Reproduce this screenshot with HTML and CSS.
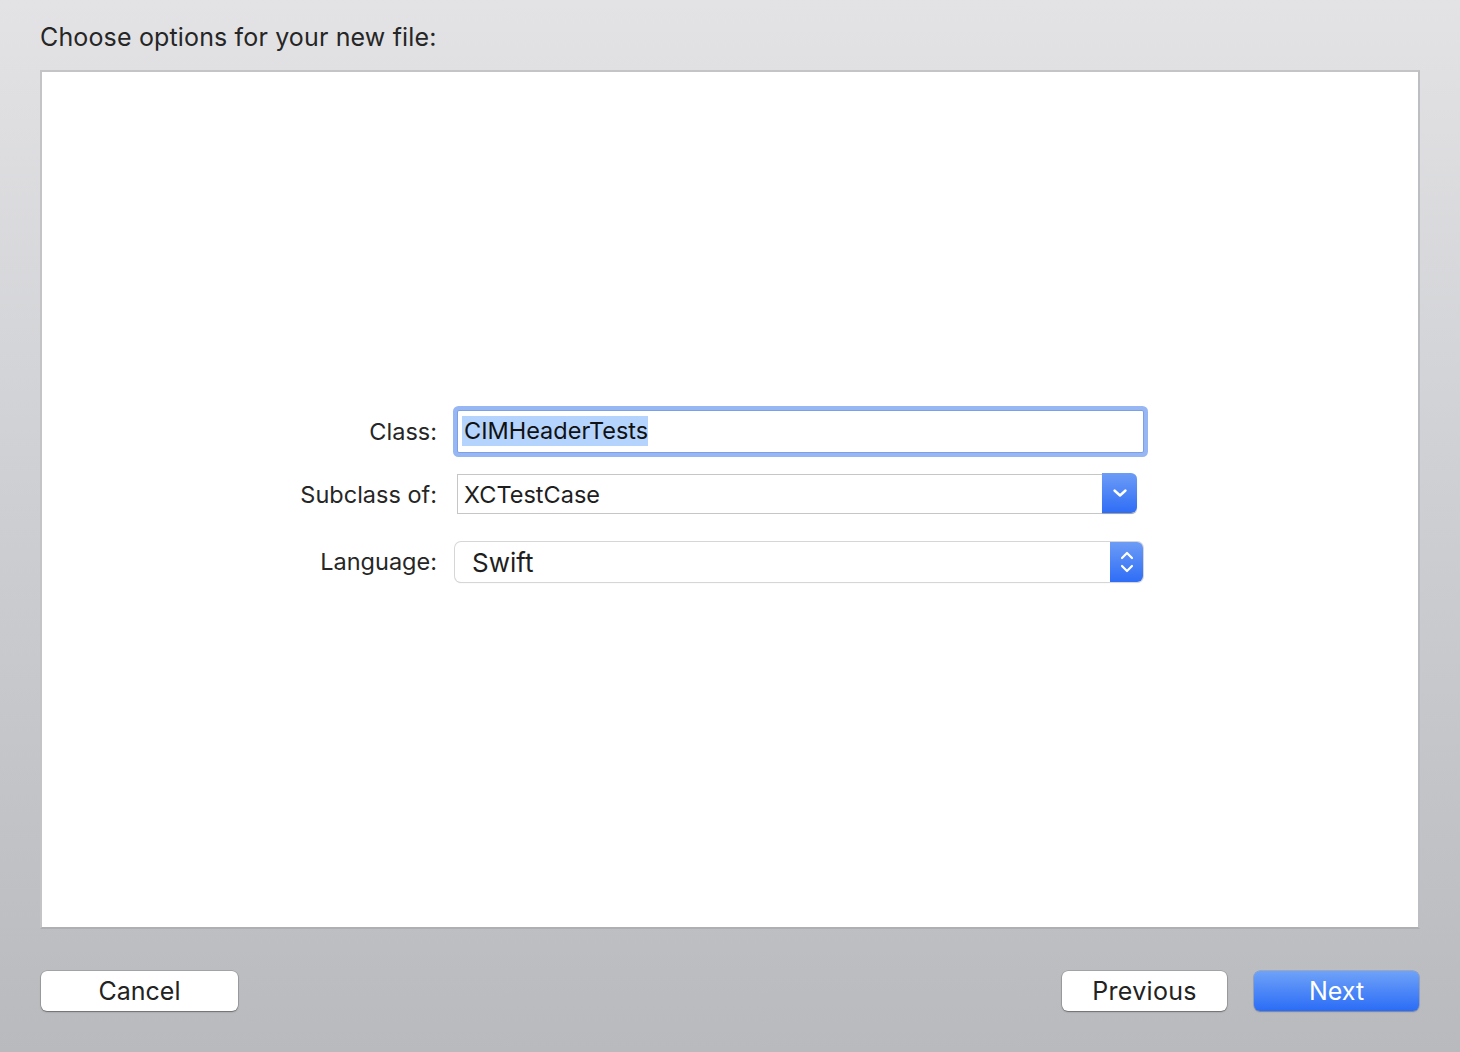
FILE: index.html
```html
<!DOCTYPE html>
<html>
<head>
<meta charset="utf-8">
<link rel="stylesheet" href="styles.css">
</head>
<body>
<div class="window">
  <header class="title">Choose options for your new file:</header>
  <main class="panel">
    <div class="form">
      <label class="label label-class">Class:</label>
      <div class="field-wrap">
        <div class="field"><span class="sel">CIMHeaderTests</span></div>
      </div>
      <label class="label label-sub">Subclass of:</label>
      <div class="combo">
        <span class="combo-text">XCTestCase</span>
        <span class="combo-btn">
          <svg width="16" height="10" viewBox="0 0 16 10"><path d="M2.5 2.5 L8 7.5 L13.5 2.5" fill="none" stroke="#fff" stroke-width="2.4" stroke-linecap="round" stroke-linejoin="round"/></svg>
        </span>
      </div>
      <label class="label label-lang">Language:</label>
      <div class="popup">
        <span class="popup-text">Swift</span>
        <span class="popup-btn">
          <svg width="16" height="28" viewBox="0 0 16 28"><path d="M3 10 L8 5 L13 10" fill="none" stroke="#fff" stroke-width="2.2" stroke-linecap="round" stroke-linejoin="round"/><path d="M3 18 L8 23 L13 18" fill="none" stroke="#fff" stroke-width="2.2" stroke-linecap="round" stroke-linejoin="round"/></svg>
        </span>
      </div>
    </div>
  </main>
  <footer class="footer">
    <button class="btn btn-cancel">Cancel</button>
    <div class="right-buttons">
      <button class="btn btn-prev">Previous</button>
      <button class="btn btn-next">Next</button>
    </div>
  </footer>
</div>
</body>
</html>
```

FILE: styles.css
```css
* { box-sizing: border-box; }
html, body { margin: 0; padding: 0; }
body {
  width: 1460px;
  height: 1052px;
  font-family: "Inter", "Liberation Sans", sans-serif;
  color: #262626;
  overflow: hidden;
}
.window {
  width: 1460px;
  height: 1052px;
  background: linear-gradient(to bottom, #e3e3e6 0%, #cfd0d3 45%, #b9babd 100%);
  padding: 0 40px;
  display: flex;
  flex-direction: column;
}
.title {
  height: 70px;
  font-size: 25px;
  line-height: 25px;
  padding-top: 25px;
  letter-spacing: 0.15px;
}
.panel {
  height: 859px;
  background: #fff;
  border-top: 2px solid #c4c4c6;
  border-left: 2px solid #c4c4c6;
  border-right: 2px solid #bdbec1;
  border-bottom: 2px solid #aeafb2;
}
.form {
  display: grid;
  grid-template-columns: 395px 1fr;
  padding-top: 333px;
  align-items: center;
}
.label {
  text-align: right;
  font-size: 23.5px;
  color: #262626;
}
.label-class { height: 53px; line-height: 53px; }
.label-sub { height: 40px; line-height: 42px; margin-top: 16px; }
.label-lang { height: 40px; line-height: 40px; margin-top: 28px; }

.field-wrap {
  height: 53px;
  padding: 5px 0 0 20px;
}
.field {
  width: 687px;
  height: 43px;
  border: 1px solid #7f9fe3;
  border-radius: 2px;
  box-shadow: 0 0 0 4px #97b6f4;
  background: #fff;
  padding: 5px 0 0 4px;
}
.sel {
  display: inline-block;
  background: #b4d4fd;
  font-size: 23.5px;
  line-height: 30px;
  height: 30px;
  padding: 0 0 0 2px;
  color: #111;
}
.combo {
  margin-top: 16px;
  margin-left: 20px;
  width: 680px;
  height: 40px;
  border: 1px solid #c6c6c6;
  border-right: none;
  background: #fff;
  display: flex;
  align-items: center;
  justify-content: space-between;
  border-radius: 0 5px 5px 0;
}
.combo-text {
  font-size: 23.5px;
  padding-left: 6px;
  color: #1e1e1e;
}
.combo-btn {
  width: 35px;
  height: 40px;
  margin-top: -2px;
  margin-bottom: -1px;
  background: linear-gradient(to bottom, #6d9cf6, #2e6df6);
  border-radius: 0 6px 6px 0;
  display: flex;
  align-items: center;
  justify-content: center;
  align-self: flex-start;
  box-shadow: 0 1px 1px rgba(0,0,0,0.2);
}
.popup {
  margin-top: 28px;
  margin-left: 18px;
  width: 688px;
  height: 40px;
  border-radius: 6px;
  background: #fff;
  box-shadow: 0 0 0 1px #d6d6d6, 0 1px 1px rgba(0,0,0,0.18);
  display: flex;
  align-items: center;
  justify-content: space-between;
  overflow: hidden;
}
.popup-text {
  font-size: 26px;
  padding-left: 17px;
  color: #1e1e1e;
}
.popup-btn {
  width: 33px;
  height: 40px;
  background: linear-gradient(to bottom, #6d9cf6, #2e6df6);
  display: flex;
  align-items: center;
  justify-content: center;
}
.footer {
  display: flex;
  justify-content: space-between;
  padding-top: 42px;
  padding-left: 1px;
}
.right-buttons {
  display: flex;
  gap: 27px;
  margin-right: 1px;
}
.btn {
  font-family: "Inter", "Liberation Sans", sans-serif;
  height: 40px;
  border-radius: 6px;
  font-size: 25px;
  line-height: 40px;
  padding: 0;
  background: #fff;
  color: #222;
  border: none;
  box-shadow: 0 0 0 0.5px rgba(0,0,0,0.25), 0 1px 1.5px rgba(0,0,0,0.35);
}
.btn-cancel { width: 197px; }
.btn-prev { width: 165px; letter-spacing: 0.3px; }
.btn-next {
  width: 165px;
  color: #fff;
  background: linear-gradient(to bottom, #6fa2f8, #2a6cf6);
  box-shadow: 0 0 0 0.5px rgba(30,80,200,0.4), 0 1px 1.5px rgba(0,0,0,0.25);
}
```
